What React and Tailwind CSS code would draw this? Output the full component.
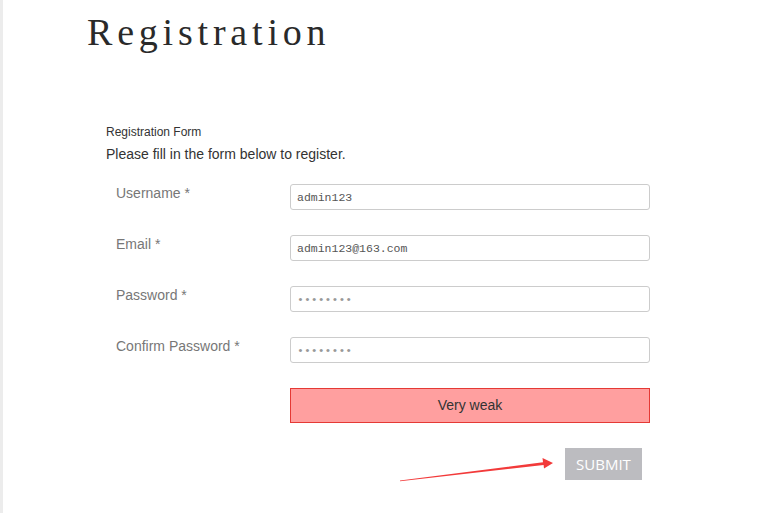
import React from 'react';

const fields = [
  { label: 'Username *', value: 'admin123', type: 'text' },
  { label: 'Email *', value: 'admin123@163.com', type: 'text' },
  { label: 'Password *', value: '12345678', type: 'password' },
  { label: 'Confirm Password *', value: '12345678', type: 'password' },
];

export default function App() {
  return (
    <div className="relative flex h-[513px] w-[779px] overflow-hidden bg-white" style={{ fontFamily: '"Liberation Sans", Arial, sans-serif' }}>
      <div className="w-[3px] shrink-0 bg-[#ececec]" />
      <div className="flex-1 pl-[84px]">
        <h1 className="mt-[10px] h-[46px] text-[38px] leading-[44px] tracking-[4.8px] text-[#2a2a2a]" style={{ fontFamily: '"Liberation Serif", "Times New Roman", serif' }}>
          Registration
        </h1>

        <div className="mt-[68px] pl-[19px]">
          <div className="text-[12px] leading-[16px] text-[#333]">Registration Form</div>
          <div className="mt-[5px] text-[14px] leading-[18px] text-[#333]">Please fill in the form below to register.</div>

          <div className="mt-[21px] flex flex-col gap-[25px]">
            {fields.map((f) => (
              <div key={f.label} className="flex items-start">
                <label className="w-[184px] shrink-0 pl-[10px] pt-[1px] text-[14px] leading-[16px] text-[#777]">{f.label}</label>
                <input
                  type={f.type}
                  defaultValue={f.value}
                  readOnly
                  className={`h-[26px] w-[360px] rounded-[3px] border border-[#ccc] px-[6px] text-[11.5px] outline-none ${f.type === 'password' ? 'text-[#999]' : 'text-[#555]'}`}
                  style={{ fontFamily: '"Liberation Mono", "Courier New", monospace' }}
                />
              </div>
            ))}
          </div>

          <div className="mt-[25px] ml-[184px] flex h-[35px] w-[360px] items-center justify-center border border-[#e53935] bg-[#ff9f9f] text-[14px] text-[#333]">
            Very weak
          </div>

          <div className="mt-[25px] ml-[459px]">
            <button
              className="h-[32px] w-[77px] bg-[#bcbcc0] text-[15px] text-white"
              style={{ fontFamily: '"Open Sans", sans-serif' }}
            >
              SUBMIT
            </button>
          </div>
        </div>
      </div>

      <svg className="absolute left-0 top-0" width="779" height="513" viewBox="0 0 779 513">
        <polygon points="400,480.5 543,462.2 542.5,458 553,463 544,468.5 543.6,465 400,481.2" fill="#f23a3a" />
      </svg>
    </div>
  );
}
